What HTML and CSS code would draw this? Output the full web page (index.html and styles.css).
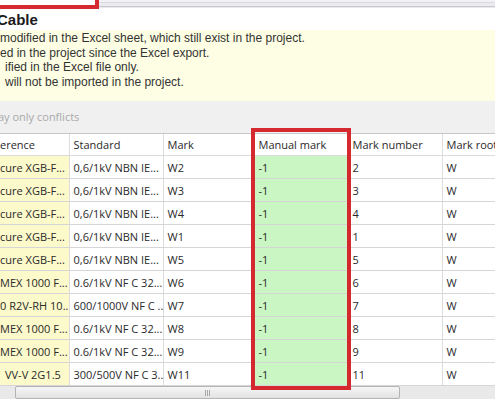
FILE: index.html
```html
<!DOCTYPE html>
<html>
<head>
<meta charset="utf-8">
<link rel="stylesheet" href="styles.css">
</head>
<body>
<div class="page">
  <div class="tabbar">
    <div class="tab"></div>
    <div class="tabstrip"></div>
  </div>
  <div class="title">Cable</div>
  <div class="info">
    <div class="line">modified in the Excel sheet, which still exist in the project.</div>
    <div class="line">ed in the project since the Excel export.</div>
    <div class="line indent">ified in the Excel file only.</div>
    <div class="line indent">will not be imported in the project.</div>
  </div>
  <div class="filter">ay only conflicts</div>
  <div class="grid">
    <table class="table">
      <colgroup>
        <col class="c1"><col class="c2"><col class="c3"><col class="c4"><col class="c5"><col class="c6">
      </colgroup>
      <thead>
        <tr><th class="clip">erence</th><th>Standard</th><th>Mark</th><th>Manual mark</th><th>Mark number</th><th>Mark root</th></tr>
      </thead>
      <tbody>
        <tr><td class="ref">cure XGB-F...</td><td>0,6/1kV NBN IE...</td><td>W2</td><td class="manual">-1</td><td>2</td><td>W</td></tr>
        <tr><td class="ref">cure XGB-F...</td><td>0,6/1kV NBN IE...</td><td>W3</td><td class="manual">-1</td><td>3</td><td>W</td></tr>
        <tr><td class="ref">cure XGB-F...</td><td>0,6/1kV NBN IE...</td><td>W4</td><td class="manual">-1</td><td>4</td><td>W</td></tr>
        <tr><td class="ref">cure XGB-F...</td><td>0,6/1kV NBN IE...</td><td>W1</td><td class="manual">-1</td><td>1</td><td>W</td></tr>
        <tr><td class="ref">cure XGB-F...</td><td>0,6/1kV NBN IE...</td><td>W5</td><td class="manual">-1</td><td>5</td><td>W</td></tr>
        <tr><td class="ref">MEX 1000 F...</td><td>0.6/1kV NF C 32...</td><td>W6</td><td class="manual">-1</td><td>6</td><td>W</td></tr>
        <tr><td class="ref">0 R2V-RH 10...</td><td>600/1000V NF C ...</td><td>W7</td><td class="manual">-1</td><td>7</td><td>W</td></tr>
        <tr><td class="ref">MEX 1000 F...</td><td>0.6/1kV NF C 32...</td><td>W8</td><td class="manual">-1</td><td>8</td><td>W</td></tr>
        <tr><td class="ref">MEX 1000 F...</td><td>0.6/1kV NF C 32...</td><td>W9</td><td class="manual">-1</td><td>9</td><td>W</td></tr>
        <tr><td class="ref indent">VV-V 2G1.5</td><td>300/500V NF C 3...</td><td>W11</td><td class="manual">-1</td><td>11</td><td>W</td></tr>
      </tbody>
    </table>
    <div class="hscroll">
      <div class="thumb"><span class="grip"></span></div>
    </div>
    <div class="highlight"></div>
  </div>
</div>
</body>
</html>
```
FILE: styles.css
```css
html, body {
  margin: 0;
  padding: 0;
  background: #ffffff;
}
.page {
  width: 495px;
  height: 400px;
  overflow: hidden;
  position: relative;
  font-family: "Liberation Sans", Arial, sans-serif;
  color: #333;
}
.tabbar {
  display: flex;
  height: 9px;
}
.tab {
  width: 99px;
  box-sizing: border-box;
  border-right: 4px solid #d42a2f;
  border-bottom: 4px solid #d42a2f;
  background: #fff;
}
.tabstrip {
  flex: 1;
  background: linear-gradient(#f2f2f5 0, #f2f2f5 2px, #d9d9df 2px, #d9d9df 3px, #ececf0 3px, #ececf0 6px, #c9c9d0 6px, #c9c9d0 7px, #e9e9ee 7px, #e9e9ee 8px, #fff 8px);
}
.title {
  height: 21px;
  line-height: 21px;
  font-size: 15px;
  font-weight: bold;
  color: #1a1a1a;
  margin-left: -3px;
}
.info {
  background: #fefee4;
  height: 71px;
  box-sizing: border-box;
  padding-top: 1px;
  font-size: 12px;
  line-height: 14.7px;
  color: #333;
}
.info .indent {
  padding-left: 5px;
}
.filter {
  background: #f0f0f0;
  height: 32px;
  line-height: 32px;
  font-family: "Open Sans", sans-serif;
  font-size: 11px;
  color: #a9a9a9;
  margin-left: -2px;
}
.grid {
  position: relative;
  background: #fff;
}
.table {
  border-collapse: collapse;
  table-layout: fixed;
  width: 560px;
  font-family: "Open Sans", sans-serif;
  font-size: 11px;
  color: #2a2a2a;
}
.c1 { width: 69px; }
.c2 { width: 94px; }
.c3 { width: 91px; }
.c4 { width: 94px; }
.c5 { width: 94px; }
.c6 { width: 118px; }
.table th {
  height: 21px;
  font-weight: normal;
  text-align: left;
  padding: 0 0 0 4px;
  border-top: 1px solid #c8c8c8;
  border-bottom: 1px solid #dcdcdc;
  border-left: 1px solid #dedede;
  background: #fff;
  white-space: nowrap;
  overflow: hidden;
}
.table td {
  height: 22px;
  padding: 0 0 0 4px;
  border-bottom: 1px solid #d6d6d6;
  border-left: 1px solid #dcdcdc;
  white-space: nowrap;
  overflow: hidden;
}
.table th.clip,
.table td.ref {
  padding-left: 0;
  border-left: none;
}
.table td.ref {
  background: #fcf9cb;
}
.table td.ref.indent {
  padding-left: 5px;
}
.table td.manual {
  background: #c9f6c3;
}
.hscroll {
  height: 13px;
  background: #e9e9e9;
  position: relative;
  display: flex;
  align-items: stretch;
  padding-left: 15px;
}
.thumb {
  width: 385px;
  box-sizing: border-box;
  border: 1px solid #b4b4b4;
  border-radius: 2px;
  background: linear-gradient(#f6f6f6, #e2e2e2);
  display: flex;
  align-items: center;
  justify-content: center;
}
.grip {
  width: 5px;
  height: 6px;
  background: repeating-linear-gradient(90deg, #a8a8a8 0, #a8a8a8 1px, transparent 1px, transparent 2px);
}
.highlight {
  position: absolute;
  left: 251px;
  top: -5px;
  width: 100px;
  height: 262px;
  box-sizing: border-box;
  border: 4px solid #d42a2f;
  pointer-events: none;
}
```
